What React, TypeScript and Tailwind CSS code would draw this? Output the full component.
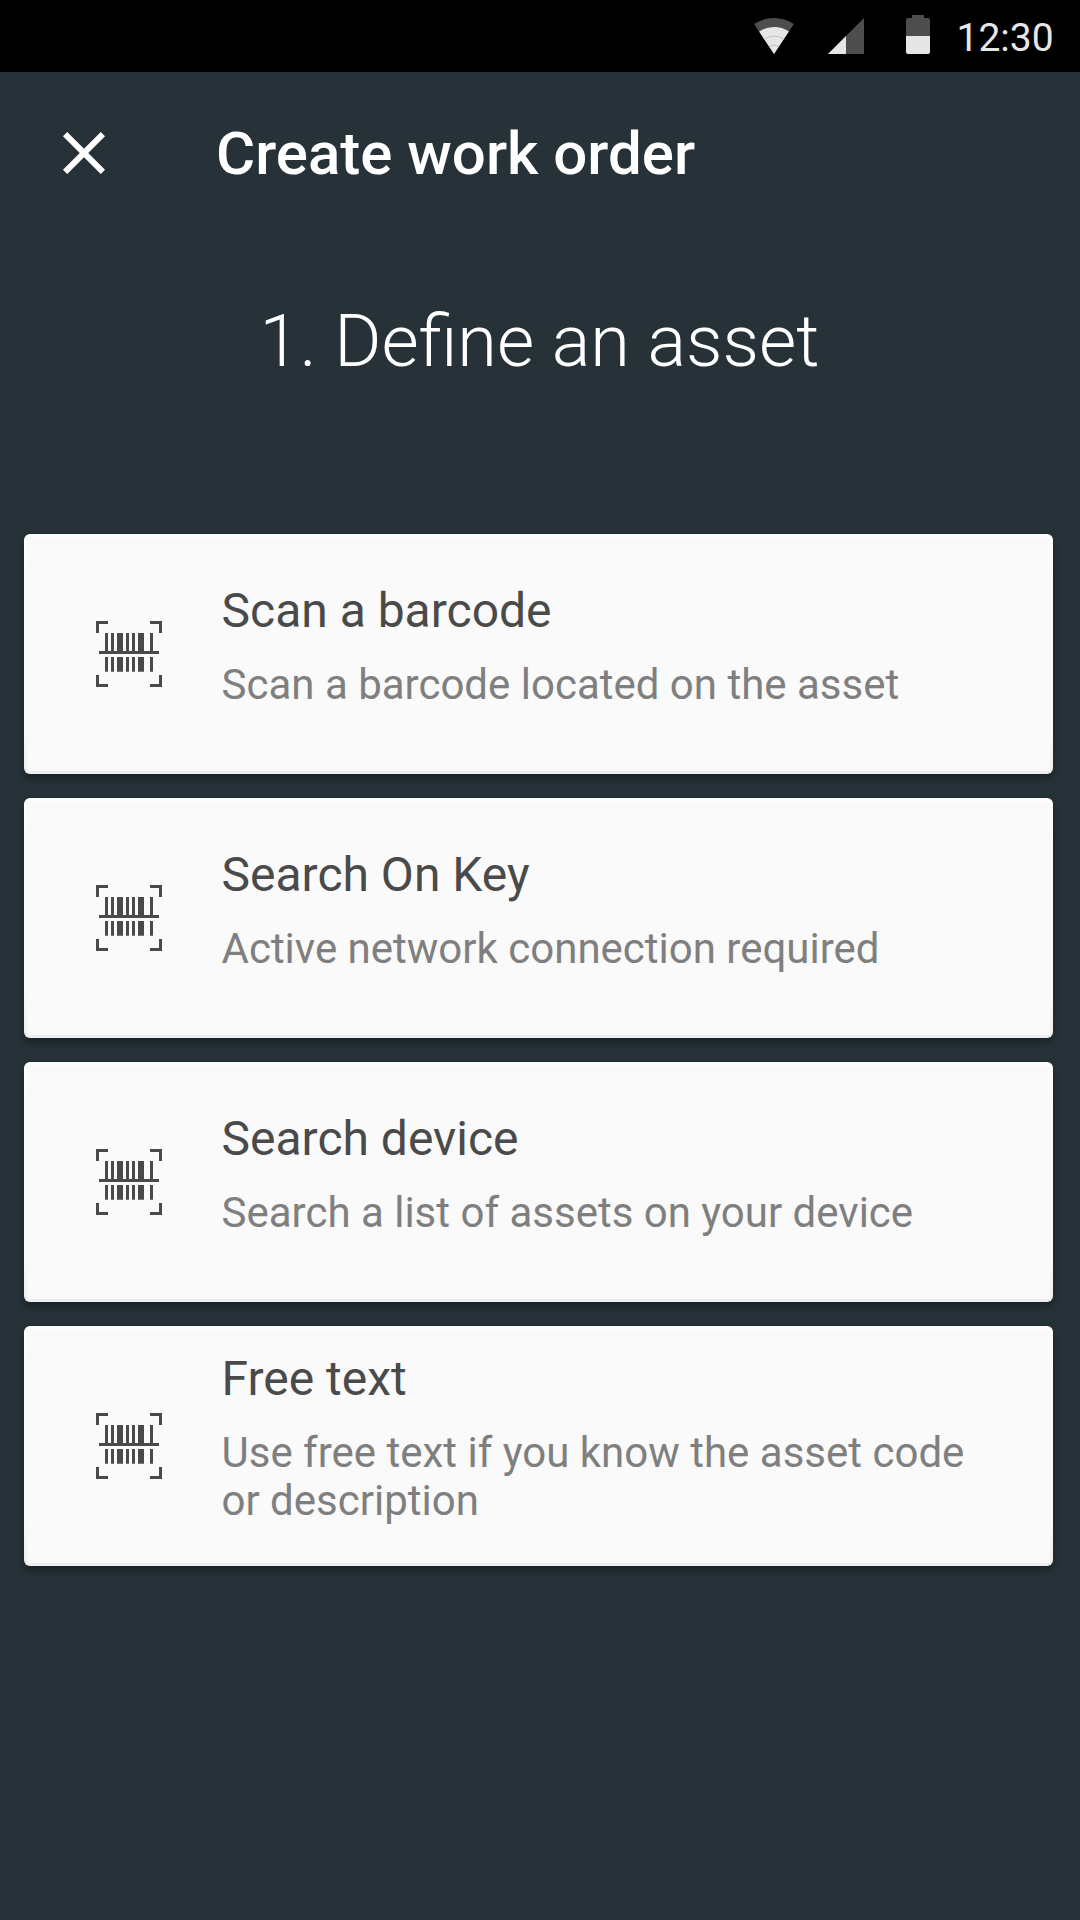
import React from 'react';

type Option = { title: string; lines: string[] };

const options: Option[] = [
  { title: 'Scan a barcode', lines: ['Scan a barcode located on the asset'] },
  { title: 'Search On Key', lines: ['Active network connection required'] },
  { title: 'Search device', lines: ['Search a list of assets on your device'] },
  { title: 'Free text', lines: ['Use free text if you know the asset code', 'or description'] },
];

function WifiIcon() {
  return (
    <svg className="h-9 w-10" viewBox="0 0 40 36">
      <path d="M20 36 L0.1 6 A36 36 0 0 1 39.9 6 Z" fill="#4d4d4d" />
      <path d="M20 36 L5.1 13.5 A27 27 0 0 1 34.9 13.5 Z" fill="#e6e6e6" />
      <path
        d="M10.6 20.9 A18 18 0 0 1 29.4 20.9 M15.3 28.4 A9.3 9.3 0 0 1 24.7 28.4"
        fill="none"
        stroke="#bdbdbd"
        strokeWidth="0.9"
      />
    </svg>
  );
}

function SignalIcon() {
  return (
    <svg className="size-9" viewBox="0 0 36 36">
      <path d="M0 36 L36 0 V36 Z" fill="#4d4d4d" />
      <path d="M0 36 L18 18 V36 Z" fill="#e6e6e6" />
    </svg>
  );
}

function BatteryIcon() {
  return (
    <svg className="h-[39px] w-6" viewBox="0 0 24 39">
      <path d="M6 0 H18 V3 H22 Q24 3 24 5 V21 H0 V5 Q0 3 2 3 H6 Z" fill="#4d4d4d" />
      <path d="M0 21 H24 V37 Q24 39 22 39 H2 Q0 39 0 37 Z" fill="#e6e6e6" />
    </svg>
  );
}

function CloseIcon() {
  return (
    <svg className="size-[72px]" viewBox="0 0 24 24" fill="#fff">
      <path d="M19 6.41L17.59 5 12 10.59 6.41 5 5 6.41 10.59 12 5 17.59 6.41 19 12 13.41 17.59 19 19 17.59 13.41 12z" />
    </svg>
  );
}

function BarcodeIcon() {
  return (
    <svg className="size-[66px]" viewBox="0 0 66 66" fill="#4a4a4a">
      <path d="M0 0H12V3H3V12H0Z M54 0H66V12H63V3H54Z M0 54H3V63H12V66H0Z M63 54H66V66H54V63H63Z" />
      <path d="M9 12h3v18h-3z M15 12h3v18h-3z M21 12h6v18h-6z M30 12h3v18h-3z M36 12h3v18h-3z M42 12h6v18h-6z M54 12h3v18h-3z" />
      <path d="M3 30H63V33H3Z" />
      <path d="M9 36h3v14.7h-3z M15 36h3v14.7h-3z M21 36h6v14.7h-6z M30 36h3v14.7h-3z M36 36h3v14.7h-3z M42 36h6v14.7h-6z M54 36h3v14.7h-3z" />
    </svg>
  );
}

function OptionCard({ title, lines }: Option) {
  return (
    <button className="flex h-60 w-full rounded-[6px] bg-[linear-gradient(180deg,#fff_0%,#fafafa_20%,#fafafa_80%,#eeeeee_100%)] p-[3px] text-left shadow-[0_6px_6px_rgba(0,0,0,0.24),0_0_6px_rgba(0,0,0,0.12)]">
      <span className="flex h-full w-full items-center rounded-[3px] bg-[#fafafa] pl-[69px]">
        <BarcodeIcon />
        <span className="ml-[59.5px] flex flex-col gap-[22px] pb-[17px]">
          <span className="text-[48px] leading-[57px] text-[#4a4a4a]">{title}</span>
          <span className="flex flex-col text-[42px] leading-[48px] text-[#7f7f7f]">
            {lines.map((line) => (
              <span key={line} className="whitespace-nowrap">
                {line}
              </span>
            ))}
          </span>
        </span>
      </span>
    </button>
  );
}

export default function App() {
  return (
    <div className="flex h-[1920px] w-[1080px] flex-col overflow-hidden bg-[#263238] font-[Roboto,sans-serif] text-white">
      <div className="flex h-[72px] items-start bg-black pl-[754px] text-[#e6e6e6]">
        <div className="pt-[18px]">
          <WifiIcon />
        </div>
        <div className="ml-[34px] pt-[18px]">
          <SignalIcon />
        </div>
        <div className="ml-[42px] pt-[15px]">
          <BatteryIcon />
        </div>
        <span className="ml-[26.5px] pt-[15px] text-[39px] leading-[46px]">12:30</span>
      </div>
      <header className="flex h-[168px] items-start pl-12">
        <button className="mt-[45px]" aria-label="Close">
          <CloseIcon />
        </button>
        <h1 className="mt-[46px] ml-24 text-[60px] leading-[72px] font-medium">Create work order</h1>
      </header>
      <h2 className="mt-[59px] pr-px text-center text-[72px] leading-[85px] font-light">1. Define an asset</h2>
      <main className="mt-[150px] flex flex-col gap-6 pr-[27px] pl-6">
        {options.map((option) => (
          <OptionCard key={option.title} {...option} />
        ))}
      </main>
    </div>
  );
}
